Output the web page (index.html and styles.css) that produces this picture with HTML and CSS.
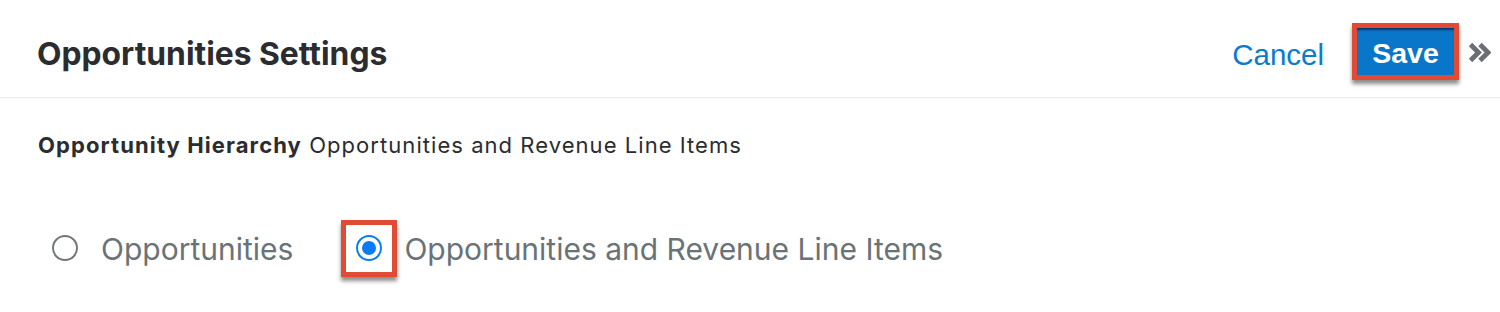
FILE: index.html
```html
<!DOCTYPE html>
<html>
<head>
<meta charset="utf-8">
<link rel="stylesheet" href="styles.css">
</head>
<body>
<div class="header">
  <h1 class="title">Opportunities Settings</h1>
  <div class="actions">
    <a class="cancel">Cancel</a>
    <div class="save-frame"><button class="save">Save</button></div>
    <span class="chev">
      <svg width="23" height="21" viewBox="0 0 23 21"><path d="M2.5 2.5 L10.5 10.5 L2.5 18.5 M12 2.5 L20 10.5 L12 18.5" fill="none" stroke="#6b6f73" stroke-width="4.8" stroke-linejoin="miter"/></svg>
    </span>
  </div>
</div>
<div class="content">
  <p class="summary"><strong>Opportunity Hierarchy</strong> Opportunities and Revenue Line Items</p>
  <div class="radios">
    <label class="opt first"><span class="radio"></span><span class="lbl">Opportunities</span></label>
    <label class="opt"><span class="hl"><span class="radio checked"></span></span><span class="lbl">Opportunities and Revenue Line Items</span></label>
  </div>
</div>
</body>
</html>
```
FILE: styles.css
```css
html, body { margin: 0; padding: 0; background: #fff; }
body { font-family: Inter, "Noto Sans", sans-serif; width: 1500px; height: 312px; overflow: hidden; }
.header {
  height: 97px;
  border-bottom: 1px solid #e4e9e9;
  display: flex;
  align-items: center;
  justify-content: space-between;
  padding: 0 9px 0 37px;
  box-sizing: content-box;
}
.title { margin: 0; font-size: 31.8px; font-weight: 700; color: #2a2c30; padding-top: 10px; }
.actions { display: flex; align-items: center; }
.cancel { font-family: "Liberation Sans", Arial, sans-serif; font-size: 29.5px; color: #0a7bd0; margin-right: 28px; padding-top: 12px; }
.save-frame {
  border: 5px solid #e14b34;
  box-shadow: 0 4px 4px rgba(0,0,0,0.45);
  margin-top: 6px;
  display: flex;
}
.save {
  border: 0;
  width: 97px;
  height: 47px;
  background: #0a76c9;
  color: #fff;
  font-family: "Liberation Sans", Arial, sans-serif;
  font-weight: 700;
  font-size: 28.5px;
  box-shadow: inset 0 3px 2px -1px rgba(0,30,80,0.7);
  padding: 3px 0 0;
}
.chev { display: flex; margin-left: 9px; margin-top: 8px; }
.content { padding-left: 38px; }
.summary { margin: 0; padding-top: 132px; font-size: 22px; line-height: 26px; letter-spacing: 1.05px; color: #2a2c30; position: absolute; top: 0; left: 38px; }
.summary strong { font-weight: 700; letter-spacing: 1.1px; }
.radios { display: flex; align-items: center; padding-top: 121px; height: 58px; }
.opt { display: flex; align-items: center; }
.first { margin-left: 14px; margin-right: 48px; }
.radio {
  width: 26px; height: 26px; border-radius: 50%;
  border: 2px solid #717679; box-sizing: border-box;
  display: block;
}
.first .lbl { margin-left: 23px; }
.lbl { font-size: 30px; color: #697377; padding-top: 2px; }
.hl {
  width: 56px; height: 57px; box-sizing: border-box;
  border: 5px solid #e14b34;
  box-shadow: 0 4px 4px rgba(0,0,0,0.45);
  display: flex; align-items: center; justify-content: center;
  margin-right: 7px;
}
.radio.checked { border: 2.5px solid #0a7cf2; position: relative; }
.radio.checked::after {
  content: ""; position: absolute; left: 3.5px; top: 3.5px; width: 14px; height: 14px; border-radius: 50%; background: #0a7cf2;
}
```
